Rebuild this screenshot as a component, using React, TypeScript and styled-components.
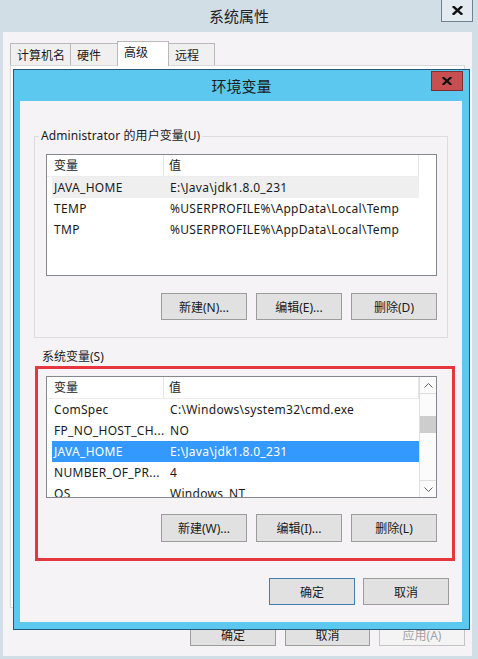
import React from "react";
import styled, { createGlobalStyle } from "styled-components";

const Global = createGlobalStyle`
  html, body { margin: 0; padding: 0; }
  body {
    width: 478px; height: 659px; overflow: hidden;
    font-family: "Noto Sans", "Noto Sans CJK SC", sans-serif;
    font-size: 12px; color: #1a1a1a;
  }
  * { box-sizing: border-box; }
`;

const Desktop = styled.div`
  position: relative;
  width: 478px;
  height: 659px;
  overflow: hidden;
`;

/* ---------- outer window: 系统属性 ---------- */
const Window = styled.div`
  display: flex;
  flex-direction: column;
  width: 478px;
  height: 659px;
  background: #d2dee6;
  padding-bottom: 3px;
`;

const TitleBar = styled.div`
  position: relative;
  height: 32px;
  flex: none;
  display: flex;
  align-items: center;
  justify-content: center;
  padding-bottom: 1px;
  font-family: "Noto Sans CJK SC", sans-serif;
  font-size: 15px;
  color: #222;
`;

const CloseBtn = styled.div<{ $red?: boolean }>`
  position: absolute;
  display: flex;
  align-items: center;
  justify-content: center;
  width: 32px;
  height: ${(p) => (p.$red ? 20 : 22)}px;
  top: ${(p) => (p.$red ? 1 : 0)}px;
  right: ${(p) => (p.$red ? 6 : 5)}px;
  background: ${(p) => (p.$red ? "#c84f4f" : "#e4ebf0")};
  border: 1px solid ${(p) => (p.$red ? "#7d3030" : "#6f8290")};
  border-top: ${(p) => (p.$red ? "1px solid #7d3030" : "none")};
`;

const Content = styled.div`
  flex: 1;
  margin: 0 6px 0 3px;
  background: #f5f3f6;
  padding: 9px 7px 10px 7px;
  display: flex;
  flex-direction: column;
`;

const Tabs = styled.div`
  display: flex;
  align-items: flex-end;
  height: 24px;
  position: relative;
  z-index: 1;
`;

const Tab = styled.div<{ $w: number; $active?: boolean }>`
  width: ${(p) => p.$w}px;
  height: ${(p) => (p.$active ? 25 : 22)}px;
  margin-bottom: ${(p) => (p.$active ? -1 : 0)}px;
  margin-left: -1px;
  padding-left: 6px;
  background: ${(p) => (p.$active ? "#ffffff" : "#f0f0f0")};
  border: 1px solid #b9b9b9;
  border-bottom: none;
  font-family: "Noto Sans CJK SC", sans-serif;
  font-size: 12px;
  line-height: ${(p) => (p.$active ? 20 : 21)}px;
  &:first-child { margin-left: 0; }
`;

const Panel = styled.div`
  height: 543px;
  flex: none;
  background: #ffffff;
  border: 1px solid #d9d9d9;
`;

const OuterButtons = styled.div`
  display: flex;
  justify-content: flex-end;
  gap: 9px;
  margin-top: 15px;
`;

const Button = styled.div<{ $w?: number; $h?: number; $default?: boolean; $disabled?: boolean }>`
  width: ${(p) => p.$w ?? 86}px;
  height: ${(p) => p.$h ?? 27}px;
  display: flex;
  align-items: center;
  justify-content: center;
  background: ${(p) => (p.$disabled ? "#f4f4f4" : "#e1e1e1")};
  border: 1px solid ${(p) => (p.$default ? "#3f7eaf" : p.$disabled ? "#c4c4c4" : "#9c9c9c")};
  color: ${(p) => (p.$disabled ? "#a3a3a3" : "#1a1a1a")};
  font-size: 12px;
`;

/* ---------- inner dialog: 环境变量 ---------- */
const Dialog = styled.div`
  position: absolute;
  left: 13px;
  top: 69px;
  width: 457px;
  height: 561px;
  border: 1px solid #22597a;
  background: #5cc8f0;
  padding: 0 7px 7px 6px;
  display: flex;
  flex-direction: column;
  z-index: 2;
`;

const DialogTitle = styled(TitleBar)`
  height: 31px;
  margin: 0 -7px 0 -6px;
  color: #1c1c1c;
`;

const Body = styled.div`
  flex: 1;
  background: #f5f3f6;
  padding: 35px 13px 17px 14px;
  display: flex;
  flex-direction: column;
`;

const Group = styled.div`
  width: 414px;
  height: 202px;
  flex: none;
  border: 1px solid #dcdcdc;
  padding: 0 10px 0 11px;
  display: flex;
  flex-direction: column;
`;

const GroupTitle = styled.div`
  align-self: flex-start;
  margin: -9px 0 0 -7px;
  padding: 0 2px;
  height: 16px;
  line-height: 16px;
  letter-spacing: 0.1px;
  background: #f5f3f6;
`;

const SectionLabel = styled.div`
  margin: 11px 0 0 8px;
  height: 16px;
  line-height: 16px;
`;

const RedFrame = styled.div`
  margin: 1px 0 0 1px;
  width: 420px;
  height: 195px;
  flex: none;
  border: 3px solid #e8373c;
  padding: 7px 15px 0 8px;
  display: flex;
  flex-direction: column;
`;

const ListBox = styled.div<{ $mt?: number }>`
  margin-top: ${(p) => p.$mt ?? 0}px;
  width: 391px;
  height: 122px;
  flex: none;
  border: 1px solid #848790;
  background: #ffffff;
  display: flex;
  overflow: hidden;
`;

const ListMain = styled.div`
  width: 372px;
  flex: none;
  display: flex;
  flex-direction: column;
  overflow: hidden;
`;

const Header = styled.div`
  display: flex;
  height: 22px;
  flex: none;
  border-bottom: 1px solid #ececec;
`;

const HeaderCell = styled.div<{ $w: number; $pl: number }>`
  width: ${(p) => p.$w}px;
  padding-left: ${(p) => p.$pl}px;
  border-right: 1px solid #e5e5e5;
  line-height: 21px;
  color: #222;
`;

const Row = styled.div<{ $state?: "hover" | "selected" }>`
  display: flex;
  flex: none;
  margin-left: 5px;
  width: 367px;
  height: 21px;
  line-height: 21px;
  white-space: nowrap;
  letter-spacing: 0.3px;
  background: ${(p) =>
    p.$state === "selected" ? "#3399ff" : p.$state === "hover" ? "#efefef" : "transparent"};
  color: ${(p) => (p.$state === "selected" ? "#ffffff" : "#1a1a1a")};
`;

const Cell = styled.div<{ $w?: number }>`
  width: ${(p) => (p.$w ? `${p.$w}px` : "auto")};
  flex: ${(p) => (p.$w ? "none" : "1")};
  padding-left: ${(p) => (p.$w ? 2 : 0)}px;
  overflow: hidden;
`;

const ScrollBar = styled.div`
  width: 17px;
  flex: none;
  display: flex;
  flex-direction: column;
  background: #fbfbfb;
  border-left: 1px solid #dedede;
`;

const ScrollArrow = styled.div<{ $bottom?: boolean }>`
  height: 17px;
  flex: none;
  display: flex;
  align-items: center;
  justify-content: center;
  border-top: ${(p) => (p.$bottom ? "1px solid #dedede" : "none")};
  border-bottom: ${(p) => (p.$bottom ? "none" : "1px solid #dedede")};
`;

const Track = styled.div`
  flex: 1;
  padding-top: 22px;
`;

const Thumb = styled.div`
  height: 17px;
  background: #cdcdcd;
`;

const ButtonRow = styled.div<{ $mt: number; $gap?: number }>`
  display: flex;
  justify-content: flex-end;
  gap: ${(p) => p.$gap ?? 9}px;
  margin-top: ${(p) => p.$mt}px;
`;

const BottomRow = styled(ButtonRow)`
  margin-top: auto;
`;

const XIcon = ({ size = 10 }: { size?: number }) => (
  <svg width={size} height={size * 0.8} viewBox="0 0 10 8">
    <path d="M1.5 0.8 L8.5 7.2 M8.5 0.8 L1.5 7.2" stroke="#111" strokeWidth="2.2" strokeLinecap="square" />
  </svg>
);

const Chevron = ({ down }: { down?: boolean }) => (
  <svg width="9" height="5" viewBox="0 0 9 5">
    <path d={down ? "M0.5 0.5 L4.5 4.5 L8.5 0.5" : "M0.5 4.5 L4.5 0.5 L8.5 4.5"} stroke="#606060" strokeWidth="1" fill="none" />
  </svg>
);

type Var = { name: string; value: string; state?: "hover" | "selected" };

const userVars: Var[] = [
  { name: "JAVA_HOME", value: "E:\\Java\\jdk1.8.0_231", state: "hover" },
  { name: "TEMP", value: "%USERPROFILE%\\AppData\\Local\\Temp" },
  { name: "TMP", value: "%USERPROFILE%\\AppData\\Local\\Temp" },
];

const sysVars: Var[] = [
  { name: "ComSpec", value: "C:\\Windows\\system32\\cmd.exe" },
  { name: "FP_NO_HOST_CH...", value: "NO" },
  { name: "JAVA_HOME", value: "E:\\Java\\jdk1.8.0_231", state: "selected" },
  { name: "NUMBER_OF_PR...", value: "4" },
  { name: "OS", value: "Windows_NT" },
];

const VarList = ({ vars, scroll, mt }: { vars: Var[]; scroll?: boolean; mt?: number }) => (
  <ListBox $mt={mt}>
    <ListMain>
      <Header>
        <HeaderCell $w={117} $pl={7}>变量</HeaderCell>
        <HeaderCell $w={255} $pl={5}>值</HeaderCell>
      </Header>
      {vars.map((v) => (
        <Row key={v.name} $state={v.state}>
          <Cell $w={118}>{v.name}</Cell>
          <Cell>{v.value}</Cell>
        </Row>
      ))}
    </ListMain>
    {scroll && (
      <ScrollBar>
        <ScrollArrow>
          <Chevron />
        </ScrollArrow>
        <Track>
          <Thumb />
        </Track>
        <ScrollArrow $bottom>
          <Chevron down />
        </ScrollArrow>
      </ScrollBar>
    )}
  </ListBox>
);

export default function App() {
  return (
    <Desktop>
      <Global />
      <Window>
        <TitleBar>
          系统属性
          <CloseBtn>
            <XIcon size={11} />
          </CloseBtn>
        </TitleBar>
        <Content>
          <Tabs>
            <Tab $w={61}>计算机名</Tab>
            <Tab $w={48}>硬件</Tab>
            <Tab $w={52} $active>高级</Tab>
            <Tab $w={47}>远程</Tab>
          </Tabs>
          <Panel />
          <OuterButtons>
            <Button $w={86} $h={23}>确定</Button>
            <Button $w={85} $h={23}>取消</Button>
            <Button $w={86} $h={23} $disabled>应用(A)</Button>
          </OuterButtons>
        </Content>
      </Window>

      <Dialog>
        <DialogTitle>
          环境变量
          <CloseBtn $red>
            <XIcon size={10} />
          </CloseBtn>
        </DialogTitle>
        <Body>
          <Group>
            <GroupTitle>Administrator 的用户变量(U)</GroupTitle>
            <VarList vars={userVars} mt={10} />
            <ButtonRow $mt={17}>
              <Button>新建(N)...</Button>
              <Button>编辑(E)...</Button>
              <Button>删除(D)</Button>
            </ButtonRow>
          </Group>
          <SectionLabel>系统变量(S)</SectionLabel>
          <RedFrame>
            <VarList vars={sysVars} scroll />
            <ButtonRow $mt={16}>
              <Button $h={28}>新建(W)...</Button>
              <Button $h={28}>编辑(I)...</Button>
              <Button $h={28}>删除(L)</Button>
            </ButtonRow>
          </RedFrame>
          <BottomRow $mt={0} $gap={8}>
            <Button $default>确定</Button>
            <Button>取消</Button>
          </BottomRow>
        </Body>
      </Dialog>
    </Desktop>
  );
}
